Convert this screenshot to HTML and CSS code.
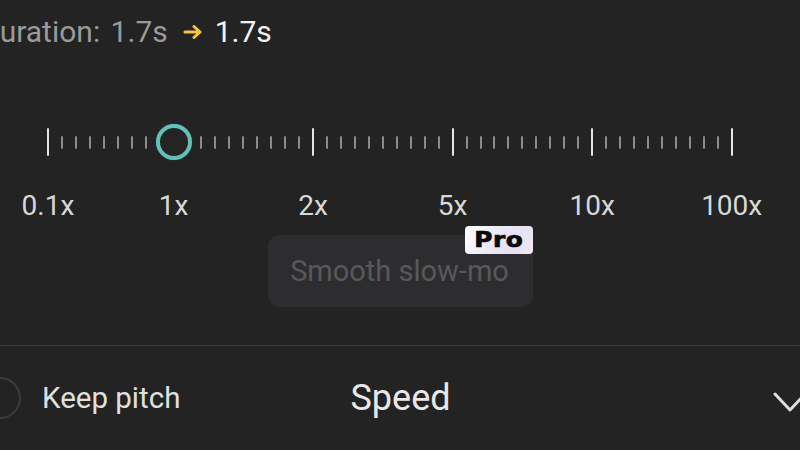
FILE: index.html
```html
<!DOCTYPE html>
<html>
<head>
<meta charset="utf-8">
<link rel="stylesheet" href="styles.css">
</head>
<body>
<div class="screen">
  <div class="header">
    <span class="old">Duration: 1.7s</span><svg class="arrow" width="20" height="14" viewBox="0 0 20 14"><path d="M2 7 H17 M11 1.5 L17 7 L11 12.5" fill="none" stroke="#f2c53d" stroke-width="3" stroke-linecap="round" stroke-linejoin="round"/></svg><span class="new">1.7s</span>
  </div>

  <div class="ruler">
    <i class="t M"></i><i class="t"></i><i class="t"></i><i class="t"></i><i class="t"></i><i class="t"></i><i class="t"></i><i class="t"></i><i class="t"></i>
    <i class="t"></i><i class="t"></i><i class="t"></i><i class="t"></i><i class="t"></i><i class="t"></i><i class="t"></i><i class="t"></i><i class="t"></i><i class="t M"></i>
    <i class="t"></i><i class="t"></i><i class="t"></i><i class="t"></i><i class="t"></i><i class="t"></i><i class="t"></i><i class="t"></i><i class="t"></i><i class="t M"></i>
    <i class="t"></i><i class="t"></i><i class="t"></i><i class="t"></i><i class="t"></i><i class="t"></i><i class="t"></i><i class="t"></i><i class="t"></i><i class="t M"></i>
    <i class="t"></i><i class="t"></i><i class="t"></i><i class="t"></i><i class="t"></i><i class="t"></i><i class="t"></i><i class="t"></i><i class="t"></i><i class="t M"></i>
    <div class="knob"></div>
  </div>

  <div class="labels">
    <span class="lab c1">0.1x</span>
    <span class="lab c10">1x</span>
    <span class="lab c20">2x</span>
    <span class="lab c30">5x</span>
    <span class="lab c40">10x</span>
    <span class="lab c50">100x</span>
  </div>

  <div class="smooth">
    <span class="smooth-text">Smooth slow-mo</span>
    <span class="pro"><b>Pro</b></span>
  </div>

  <div class="divider"></div>

  <div class="bottom">
    <div class="pitch">
      <span class="radio"></span>
      <span class="pitch-text">Keep pitch</span>
    </div>
    <div class="title">Speed</div>
    <div class="chev">
      <svg width="34" height="22" viewBox="0 0 34 22"><path d="M2 2 L17 18 L32 2" fill="none" stroke="#dedede" stroke-width="3" stroke-linecap="round" stroke-linejoin="round"/></svg>
    </div>
  </div>
</div>
</body>
</html>
```

FILE: styles.css
```css
html, body {
  margin: 0;
  padding: 0;
  background: #232323;
  overflow: hidden;
}
.screen {
  width: 800px;
  height: 450px;
  overflow: hidden;
  font-family: Roboto, "Noto Sans", sans-serif;
  background: #232323;
}
.header {
  padding-top: 17px;
  height: 30px;
  line-height: 30px;
  font-size: 30px;
  white-space: nowrap;
  text-indent: -20px;
  display: flex;
  align-items: center;
}
.old { color: #9a9a9a; word-spacing: 3px; }
.arrow { margin: 0 12px 0 15px; flex: none; }
.new { color: #f2f2f2; text-indent: 0; }

.ruler {
  margin-top: 75px;
  height: 40px;
  display: grid;
  grid-template-columns: repeat(50, 13.96px);
  grid-template-rows: 40px;
  margin-left: 41px;
  align-items: center;
  justify-items: center;
}
.t {
  display: block;
  width: 2px;
  height: 13px;
  border-radius: 1px;
  background: #8a8a8a;
}
.t.M {
  height: 28px;
  background: #e4e4e4;
}
.knob {
  grid-row: 1;
  grid-column: 10;
  width: 28px;
  height: 28px;
  border: 4px solid #62c1b7;
  border-radius: 50%;
  background: #242424;
  box-shadow: 0 0 1px rgba(98,193,183,0.5);
}

.labels {
  margin-top: 30px;
  height: 28px;
  display: grid;
  grid-template-columns: repeat(50, 13.96px);
  margin-left: 41px;
  justify-items: center;
  font-size: 28px;
  line-height: 28px;
  color: #d8d8d8;
}
.lab { grid-row: 1; white-space: nowrap; }
.c1 { grid-column: 1; }
.c10 { grid-column: 10; }
.c20 { grid-column: 20; }
.c30 { grid-column: 30; }
.c40 { grid-column: 40; }
.c50 { grid-column: 50; }

.smooth {
  position: relative;
  margin-top: 15px;
  margin-left: 268px;
  width: 265px;
  height: 72px;
  border-radius: 12px;
  background: #2d2d2f;
  display: flex;
  align-items: center;
  justify-content: center;
}
.smooth-text {
  font-size: 29px;
  color: #58585a;
  white-space: nowrap;
  padding-right: 2px;
}
.pro {
  position: absolute;
  top: -9px;
  right: 0;
  width: 68px;
  height: 28px;
  border-radius: 4px;
  background: linear-gradient(120deg, #ffffff 0%, #ebe8f8 45%, #e4e2f4 70%, #f3e8f0 100%);
  display: flex;
  align-items: center;
  justify-content: center;
}
.pro b {
  display: inline-block;
  font-family: "DejaVu Sans", sans-serif;
  font-weight: 900;
  font-size: 21px;
  line-height: 21px;
  color: #0a0a0a;
  transform: scaleX(1.18);
  letter-spacing: 0.5px;
  -webkit-text-stroke: 0.7px #0a0a0a;
}

.divider {
  margin-top: 38px;
  height: 1px;
  background: #383838;
}

.bottom {
  height: 104px;
  display: grid;
  grid-template-columns: 1fr auto 1fr;
  align-items: center;
}
.pitch {
  display: flex;
  align-items: center;
  margin-left: -21px;
}
.radio {
  width: 38px;
  height: 38px;
  border: 2px solid #3c3c3c;
  border-radius: 50%;
  flex: none;
}
.pitch-text {
  margin-left: 21px;
  font-size: 29.5px;
  color: #e0e0e0;
  white-space: nowrap;
}
.title {
  font-size: 36px;
  color: #e8e8e8;
  padding-left: 1px;
}
.chev {
  justify-self: end;
  display: flex;
  margin-right: -7px;
  padding-top: 10px;
}
```
